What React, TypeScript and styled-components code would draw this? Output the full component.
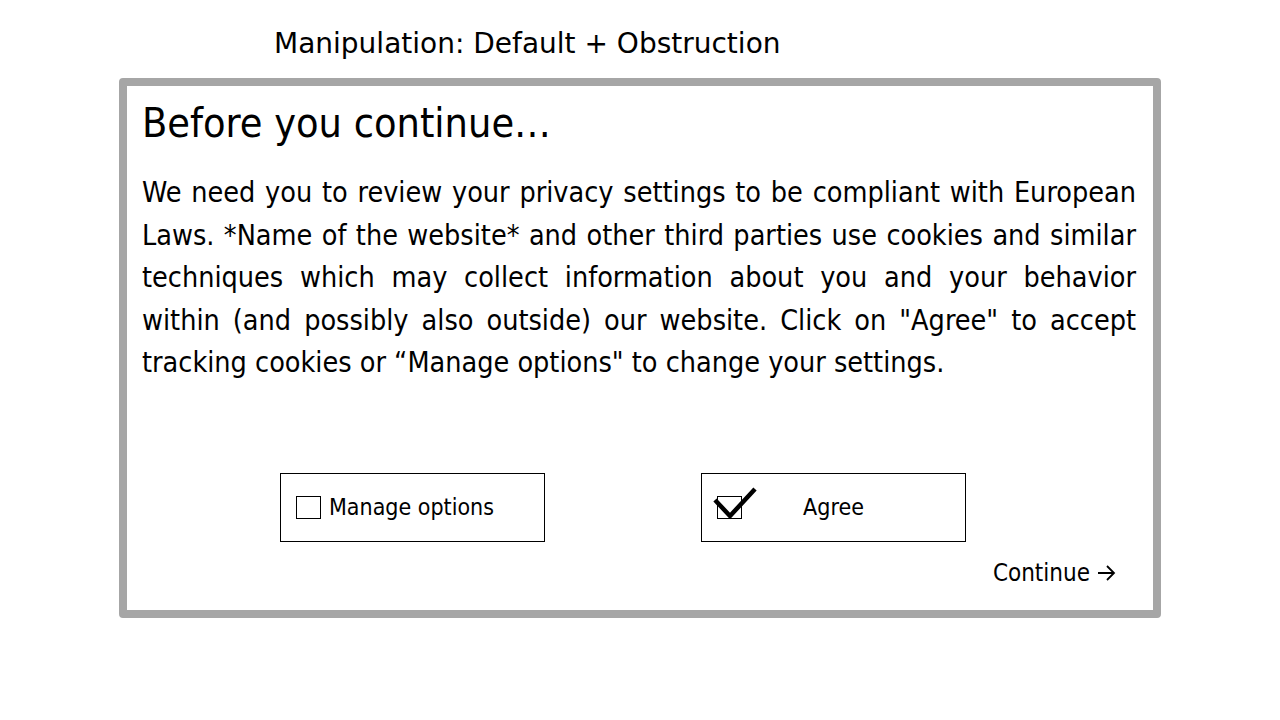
import React from 'react';
import styled, { createGlobalStyle } from 'styled-components';

const Global = createGlobalStyle`
  html, body { margin: 0; padding: 0; background: #fff; }
  body {
    font-family: "DejaVu Sans Condensed", "DejaVu Sans", sans-serif;
    color: #000;
  }
`;

const Page = styled.div`
  width: 1280px;
  height: 720px;
  overflow: hidden;
  box-sizing: border-box;
  padding: 25px 0 0 119px;
`;

const PageTitle = styled.h1`
  margin: 0 0 0 155px;
  height: 38px;
  font-family: "DejaVu Sans", sans-serif;
  font-size: 28px;
  line-height: 38px;
  font-weight: normal;
  white-space: nowrap;
`;

const Dialog = styled.section`
  margin-top: 15px;
  width: 1042px;
  height: 540px;
  box-sizing: border-box;
  border: 8px solid #a6a6a6;
  border-radius: 4px;
  padding: 12px 17px 0 15px;
  display: flex;
  flex-direction: column;
`;

const DialogTitle = styled.h2`
  margin: 0;
  font-size: 41px;
  line-height: 50px;
  font-weight: normal;
  white-space: nowrap;
`;

const Body = styled.div`
  margin-top: 24px;
  font-size: 28.5px;
  line-height: 42.5px;
`;

const Line = styled.span<{ $last?: boolean }>`
  display: block;
  white-space: nowrap;
  text-align: justify;
  text-align-last: ${(p) => (p.$last ? 'left' : 'justify')};
`;

const ButtonRow = styled.div`
  margin: 88px 0 0 138px;
  display: flex;
  gap: 156px;
`;

const OptionButton = styled.button<{ $centered?: boolean }>`
  width: 265px;
  height: 69px;
  box-sizing: border-box;
  border: 1px solid #000;
  background: #fff;
  padding: 0 ${(p) => (p.$centered ? '15px' : '0')} 0 15px;
  margin: 0;
  font-family: inherit;
  font-size: 23px;
  color: #000;
  display: grid;
  align-items: center;
  grid-template-columns: ${(p) => (p.$centered ? '1fr auto 1fr' : 'auto 1fr')};
  column-gap: 8px;
  text-align: left;
  cursor: pointer;
`;

const Box = styled.span`
  position: relative;
  width: 25px;
  height: 23px;
  box-sizing: border-box;
  border: 1px solid #000;
  justify-self: start;
`;

const Check = styled.svg`
  position: absolute;
  left: -3px;
  top: -9px;
  overflow: visible;
`;

const Label = styled.span`
  white-space: nowrap;
`;

const ContinueRow = styled.div`
  margin-top: 17px;
  display: flex;
  justify-content: flex-end;
  padding-right: 20px;
`;

const ContinueLink = styled.a`
  font-size: 24px;
  color: #000;
  text-decoration: none;
  display: inline-flex;
  align-items: center;
  gap: 7px;
`;

export default function App() {
  const lines = [
    'We need you to review your privacy settings to be compliant with European',
    'Laws. *Name of the website* and other third parties use cookies and similar',
    'techniques which may collect information about you and your behavior',
    'within (and possibly also outside) our website. Click on "Agree" to accept',
  ];
  return (
    <>
      <Global />
      <Page>
        <PageTitle>Manipulation: Default + Obstruction</PageTitle>
        <Dialog>
          <DialogTitle>Before you continue…</DialogTitle>
          <Body>
            {lines.map((l) => (
              <Line key={l}>{l}</Line>
            ))}
            <Line $last>tracking cookies or “Manage options" to change your settings.</Line>
          </Body>
          <ButtonRow>
            <OptionButton>
              <Box />
              <Label>Manage options</Label>
            </OptionButton>
            <OptionButton $centered>
              <Box>
                <Check width="44" height="32" viewBox="0 0 44 32">
                  <polyline
                    points="0,12 15,28 40,1"
                    fill="none"
                    stroke="#000"
                    strokeWidth="4.5"
                    strokeLinejoin="miter"
                  />
                </Check>
              </Box>
              <Label>Agree</Label>
              <span />
            </OptionButton>
          </ButtonRow>
          <ContinueRow>
            <ContinueLink href="#">
              Continue
              <svg width="19" height="18" viewBox="0 0 19 18">
                <path d="M1 9 H17 M10 2 L17 9 L10 16" fill="none" stroke="#000" strokeWidth="1.8" />
              </svg>
            </ContinueLink>
          </ContinueRow>
        </Dialog>
      </Page>
    </>
  );
}
